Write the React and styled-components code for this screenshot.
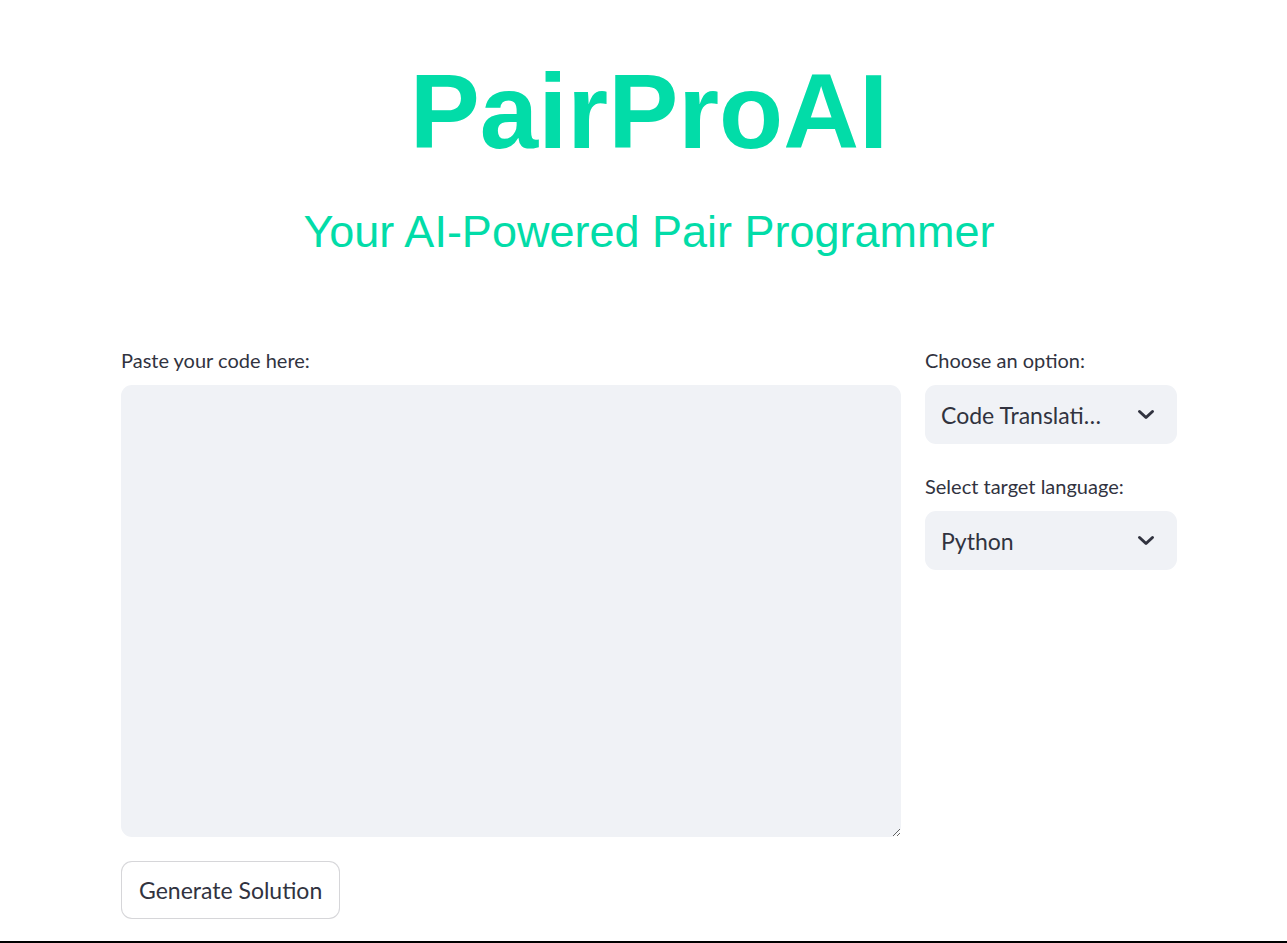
import React from 'react';
import styled, { createGlobalStyle } from 'styled-components';

const GlobalStyle = createGlobalStyle`
    html, body {
        margin: 0;
        padding: 0;
        background: #ffffff;
    }
    body {
        font-family: Lato, "Liberation Sans", sans-serif;
        color: #31333f;
    }
`;

const Page = styled.div`
    height: 943px;
    box-sizing: border-box;
    border-bottom: 2px solid #000000;
    overflow: hidden;
`;

const Main = styled.main`
    width: 1056px;
    margin-left: 121px;
    padding-top: 59px;
`;

const Title = styled.h1`
    margin: 0;
    font-family: "Liberation Sans", Arial, sans-serif;
    font-weight: 700;
    font-size: 105px;
    line-height: 105px;
    text-align: center;
    color: #02dca8;
`;

const Subtitle = styled.h2`
    margin: 45px 0 0;
    font-family: "Liberation Sans", Arial, sans-serif;
    font-weight: 400;
    font-size: 45px;
    line-height: 45px;
    text-align: center;
    color: #02dca8;
`;

const Columns = styled.div`
    display: grid;
    grid-template-columns: 780px 252px;
    column-gap: 24px;
    margin-top: 92px;
    align-items: start;
`;

const Field = styled.div`
    display: flex;
    flex-direction: column;
    gap: 11px;
`;

const Stack = styled.div`
    display: flex;
    flex-direction: column;
    gap: 28px;
`;

const Label = styled.label`
    font-size: 20px;
    line-height: 28px;
    color: #31333f;
`;

const CodeArea = styled.textarea`
    display: block;
    box-sizing: border-box;
    width: 100%;
    height: 452px;
    border: none;
    border-radius: 11px;
    background: #f0f2f6;
    padding: 14px 18px;
    font-family: "Liberation Mono", monospace;
    font-size: 20px;
    color: #31333f;
    resize: vertical;
    outline: none;
`;

const SelectBox = styled.div`
    display: flex;
    align-items: center;
    justify-content: space-between;
    box-sizing: border-box;
    height: 59px;
    padding: 0 22px 0 16px;
    border-radius: 11px;
    background: #f0f2f6;
    cursor: pointer;
`;

const SelectValue = styled.span`
    flex: 1;
    min-width: 0;
    max-width: 166px;
    white-space: nowrap;
    overflow: hidden;
    text-overflow: ellipsis;
    font-size: 23px;
    line-height: 30px;
    color: #31333f;
`;

const Chevron = () => (
    <svg width="18" height="12" viewBox="0 0 18 12" fill="none">
        <polyline points="2.5,2.5 9,8.5 15.5,2.5" stroke="#31333f" strokeWidth="3" strokeLinecap="round" strokeLinejoin="round" />
    </svg>
);

const Actions = styled.div`
    margin-top: 24px;
`;

const Button = styled.button`
    box-sizing: border-box;
    height: 58px;
    padding: 0 17px;
    border: 1px solid rgba(49, 51, 63, 0.2);
    border-radius: 11px;
    background: #ffffff;
    font-family: Lato, "Liberation Sans", sans-serif;
    font-size: 23px;
    color: #31333f;
    cursor: pointer;
`;

function Select({ label, value }) {
    return (
        <Field>
            <Label>{label}</Label>
            <SelectBox>
                <SelectValue>{value}</SelectValue>
                <Chevron />
            </SelectBox>
        </Field>
    );
}

export default function App() {
    return (
        <Page>
            <GlobalStyle />
            <Main>
                <Title>PairProAI</Title>
                <Subtitle>Your AI-Powered Pair Programmer</Subtitle>

                <Columns>
                    <Field>
                        <Label htmlFor="code">Paste your code here:</Label>
                        <CodeArea id="code" spellCheck={false} />
                    </Field>
                    <Stack>
                        <Select label="Choose an option:" value="Code Translation" />
                        <Select label="Select target language:" value="Python" />
                    </Stack>
                </Columns>

                <Actions>
                    <Button>Generate Solution</Button>
                </Actions>
            </Main>
        </Page>
    );
}
